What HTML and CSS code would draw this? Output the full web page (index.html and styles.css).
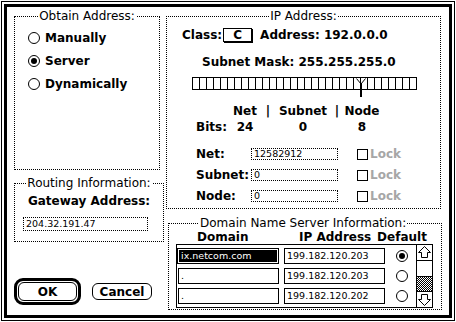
FILE: index.html
```html
<!DOCTYPE html>
<html lang="en">
<head>
    <meta charset="UTF-8">
    <title>MacTCP Configuration</title>
    <link rel="stylesheet" href="styles.css">
</head>
<body>

<div class="window">
<div class="outer-line">
<div class="frame">

    <div class="col-left">
        <fieldset class="group obtain">
            <legend>Obtain Address:</legend>
            <ul class="choices">
                <li><span class="radio"></span>Manually</li>
                <li><span class="radio on"></span>Server</li>
                <li><span class="radio"></span>Dynamically</li>
            </ul>
        </fieldset>

        <fieldset class="group routing">
            <legend>Routing Information:</legend>
            <div class="gw-label">Gateway Address:</div>
            <div class="field gw-field">204.32.191.47</div>
        </fieldset>

        <div class="buttons">
            <div class="default-ring"><button class="btn ok">OK</button></div>
            <button class="btn cancel">Cancel</button>
        </div>
    </div>

    <div class="col-right">
        <fieldset class="group ip">
            <legend>IP Address:</legend>

            <div class="class-row">
                <span>Class:</span>
                <span class="popup">C</span>
                <span class="address">Address: 192.0.0.0</span>
            </div>

            <div class="mask">Subnet Mask: 255.255.255.0</div>

            <div class="slider">
                <div class="bar"></div>
                <svg class="thumb" width="12" height="20" viewBox="0 0 12 20">
                    <path d="M0.5 0.5 H11.5 M1.5 1.5 L6 7 L10.5 1.5" fill="none" stroke="#000"/>
                    <rect x="5" y="6" width="2" height="14" fill="#000"/>
                </svg>
            </div>

            <div class="bits">
                <span></span><span>Net</span><span>|</span><span>Subnet</span><span>|</span><span>Node</span>
                <span class="lbl">Bits:</span><span>24</span><span></span><span>0</span><span></span><span>8</span>
            </div>

            <div class="parts">
                <span class="lbl">Net:</span>
                <div class="field">12582912</div>
                <span class="check"></span>
                <span class="lock">Lock</span>

                <span class="lbl">Subnet:</span>
                <div class="field">0</div>
                <span class="check"></span>
                <span class="lock">Lock</span>

                <span class="lbl">Node:</span>
                <div class="field">0</div>
                <span class="check"></span>
                <span class="lock">Lock</span>
            </div>
        </fieldset>

        <fieldset class="group dns">
            <legend>Domain Name Server Information:</legend>
            <div class="dns-head">
                <span class="h-domain">Domain</span>
                <span class="h-ip">IP Address</span>
                <span class="h-default">Default</span>
            </div>
            <div class="table">
                <div class="rows">
                    <div class="row">
                        <div class="cell domain selected">ix.netcom.com</div>
                        <div class="cell ipaddr">199.182.120.203</div>
                        <span class="radio on"></span>
                    </div>
                    <div class="row">
                        <div class="cell domain">.</div>
                        <div class="cell ipaddr">199.182.120.203</div>
                        <span class="radio"></span>
                    </div>
                    <div class="row">
                        <div class="cell domain">.</div>
                        <div class="cell ipaddr">199.182.120.202</div>
                        <span class="radio"></span>
                    </div>
                </div>
                <div class="scrollbar">
                    <div class="arrow">
                        <svg width="15" height="15" viewBox="0 0 15 15">
                            <path d="M7.5 1.5 L13.5 7.5 H10.5 V12.5 H4.5 V7.5 H1.5 Z" fill="none" stroke="#000"/>
                        </svg>
                    </div>
                    <div class="sb-thumb"></div>
                    <div class="track"></div>
                    <div class="arrow">
                        <svg width="15" height="15" viewBox="0 0 15 15">
                            <path d="M7.5 13.5 L13.5 7.5 H10.5 V2.5 H4.5 V7.5 H1.5 Z" fill="none" stroke="#000"/>
                        </svg>
                    </div>
                </div>
            </div>
        </fieldset>
    </div>

</div>
</div>
</div>

</body>
</html>
```

FILE: styles.css
```css
 body {
     margin: 0;
     background-color: white;
     color: black;
     font-family: "DejaVu Sans", sans-serif;
 }

 .window {
     width: 456px;
     height: 322px;
     box-sizing: border-box;
     padding: 1px;
 }

 .outer-line {
     height: 100%;
     box-sizing: border-box;
     border: 1px solid black;
     padding: 2px;
 }

 .frame {
     height: 100%;
     box-sizing: border-box;
     border: 3px solid black;
     padding: 2px 0 0 7px;
     display: flex;
 }

 .col-left, .col-right {
     display: flex;
     flex-direction: column;
 }

 /* bold system font */
 .choices li, .gw-label, .btn, .class-row, .mask, .bits, .parts .lbl, .lock, .dns-head {
     font-weight: bold;
     font-size: 12px;
     line-height: 16px;
 }

 .group {
     margin: 0;
     padding: 0;
     border: 1px dotted black;
     min-width: 0;
     box-sizing: border-box;
 }

 .group legend {
     font-size: 12px;
     line-height: 14px;
     padding: 0 1px;
     margin: 0 auto;
 }

 .field {
     box-sizing: border-box;
     border: 1px dotted black;
     font-size: 9.5px;
     padding-left: 2px;
     white-space: nowrap;
     overflow: hidden;
 }

 .radio {
     width: 12px;
     height: 12px;
     box-sizing: border-box;
     border: 1px solid black;
     border-radius: 50%;
     display: flex;
     align-items: center;
     justify-content: center;
     flex-shrink: 0;
 }

 .radio.on::after {
     content: "";
     width: 6px;
     height: 6px;
     border-radius: 50%;
     background-color: black;
 }

 /* left column */
 .obtain {
     width: 146px;
     height: 161px;
 }

 .choices {
     list-style: none;
     margin: 7px 0 0 13px;
     padding: 0;
     display: flex;
     flex-direction: column;
     gap: 7px;
 }

 .choices li {
     display: flex;
     align-items: center;
     gap: 5px;
 }

 .routing {
     width: 150px;
     margin-top: 6px;
     padding-bottom: 10px;
 }

 .gw-label {
     margin-top: 3px;
     text-align: center;
 }

 .gw-field {
     margin: 8px 0 0 8px;
     width: 125px;
     height: 14px;
     line-height: 12px;
 }

 .buttons {
     margin-top: 36px;
     display: flex;
     align-items: center;
     gap: 11px;
 }

 .default-ring {
     border: 3px solid black;
     border-radius: 9px;
     padding: 1px;
     display: flex;
 }

 .btn {
     font-family: "DejaVu Sans", sans-serif;
     background-color: white;
     color: black;
     border: 1px solid black;
     border-radius: 6px;
     padding: 0;
     margin: 0;
 }

 .btn.ok {
     width: 59px;
     height: 19px;
 }

 .btn.cancel {
     width: 60px;
     height: 17px;
 }

 /* IP address box */
 .col-right {
     margin-left: 2px;
 }

 .ip {
     width: 275px;
     padding-bottom: 6px;
 }

 .class-row {
     margin: 4px 0 0 15px;
     display: flex;
     align-items: center;
 }

 .popup {
     width: 29px;
     height: 14px;
     box-sizing: border-box;
     border: 1px solid black;
     box-shadow: 1px 1px 0 black;
     margin-left: 1px;
     text-align: center;
     line-height: 12px;
 }

 .address {
     margin-left: 8px;
 }

 .mask {
     margin: 11px 0 0 35px;
 }

 .slider {
     position: relative;
     margin: 5px 0 0 25px;
     width: 225px;
     height: 20px;
 }

 .bar {
     margin-top: 7px;
     height: 13px;
     box-sizing: border-box;
     border-top: 1px solid black;
     border-bottom: 1px solid black;
     background: repeating-linear-gradient(to right, black 0 1px, white 1px 7px);
 }

 .thumb {
     position: absolute;
     left: 163px;
     top: 0;
 }

 .bits {
     margin: 6px 0 0 29px;
     display: grid;
     grid-template-columns: 34px 30px 16px 54px 14px 36px;
     text-align: center;
 }

 .bits .lbl {
     text-align: left;
 }

 .parts {
     margin: 13px 0 0 29px;
     display: grid;
     grid-template-columns: 55px 87px 30px auto;
     grid-auto-rows: 12px;
     row-gap: 9px;
     align-items: center;
 }

 .parts .field {
     height: 12px;
     line-height: 10px;
 }

 .check {
     width: 11px;
     height: 11px;
     box-sizing: border-box;
     border: 1px solid black;
     margin-left: 19px;
 }

 .lock {
     color: #a6a6a6;
     margin-left: 2px;
 }

 /* DNS box */
 .dns {
     width: 274px;
     margin: 7px 0 0 2px;
     padding: 1px 0 1px 0;
 }

 .dns legend {
     margin: 0 0 0 30px;
 }

 .dns-head {
     display: flex;
     line-height: 13px;
     height: 13px;
     text-align: center;
     white-space: nowrap;
 }

 .h-domain {
     width: 50px;
     margin-left: 28px;
 }

 .h-ip {
     width: 72px;
     margin-left: 52px;
 }

 .h-default {
     width: 50px;
     margin-left: 6px;
 }

 .table {
     margin-left: 7px;
     width: 257px;
     box-sizing: border-box;
     border: 1px solid black;
     display: flex;
 }

 .rows {
     flex: 1;
     padding: 3px 0 3px 1px;
     display: flex;
     flex-direction: column;
     gap: 4px;
 }

 .row {
     display: flex;
     align-items: center;
 }

 .cell {
     height: 16px;
     box-sizing: border-box;
     border: 1px solid black;
     font-size: 9.5px;
     line-height: 14px;
     padding-left: 2px;
     white-space: nowrap;
 }

 .cell.domain {
     width: 101px;
 }

 .cell.domain.selected {
     margin-left: -1px;
     width: 102px;
     background-color: black;
     color: white;
     box-shadow: inset 0 0 0 1px white;
     padding-left: 3px;
 }

 .cell.ipaddr {
     width: 101px;
     margin-left: 5px;
 }

 .row .radio {
     margin-left: 11px;
 }

 .scrollbar {
     width: 16px;
     box-sizing: border-box;
     border-left: 1px solid black;
     display: flex;
     flex-direction: column;
 }

 .arrow {
     height: 16px;
     box-sizing: border-box;
     display: flex;
     align-items: center;
     justify-content: center;
 }

 .arrow:first-child {
     border-bottom: 1px solid black;
 }

 .arrow:last-child {
     border-top: 1px solid black;
 }

 .sb-thumb {
     height: 16px;
     box-sizing: border-box;
     border-bottom: 1px solid black;
 }

 .track {
     flex: 1;
     background: repeating-conic-gradient(black 0 25%, white 0 50%) 0 0 / 2px 2px;
 }
```
